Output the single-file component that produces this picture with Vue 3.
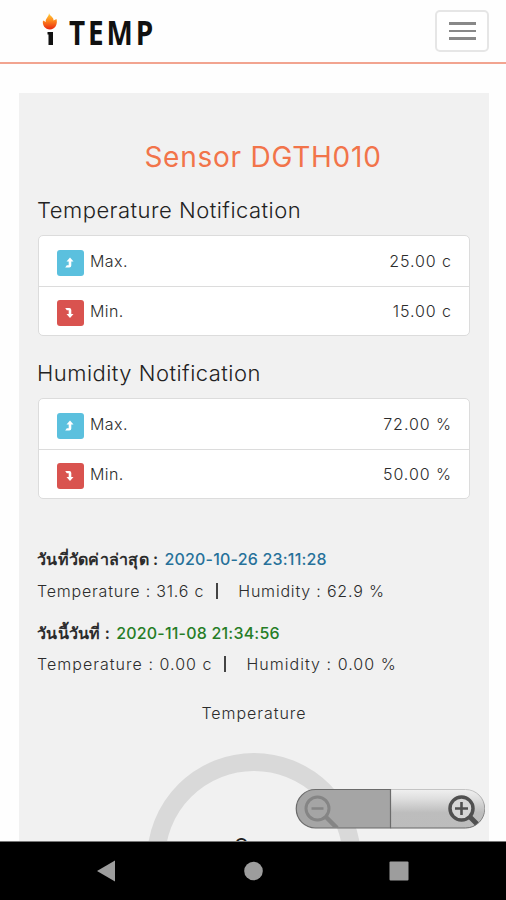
<!-- App.vue -->
<!-- Sensor detail page -->
<template>
  <div class="screen">
    <header class="navbar">
      <div class="logo">
        <svg class="flame" width="16" height="34" viewBox="0 0 16 34">
          <defs>
            <linearGradient id="fire" x1="0" y1="0" x2="0" y2="1">
              <stop offset="0" stop-color="#ffd23c" />
              <stop offset="0.45" stop-color="#ff8a1e" />
              <stop offset="1" stop-color="#e8260f" />
            </linearGradient>
          </defs>
          <path d="M7 0C7.5 3 12 4 11.5 7.500L14.500 6C16 11 13 16.500 8 16.500C3 16.500 0 12 1 7.500L4 9C2.500 6 7 4 7 0Z" fill="url(#fire)" />
          <path d="M5.500 19H11V32H6.500V21.500H5.500Z" fill="#111" />
        </svg>
        <span class="brand">TEMP</span>
      </div>
      <button class="toggle" aria-label="menu">
        <span></span>
        <span></span>
        <span></span>
      </button>
    </header>

    <main class="card">
      <h1>Sensor DGTH010</h1>

      <section v-for="group in groups" :key="group.title" class="group">
        <h2>{{ group.title }}</h2>
        <ul>
          <li v-for="row in group.rows" :key="row.label">
            <span class="badge" :class="row.type">
              <svg width="10" height="12" viewBox="0 0 10 12">
                <path v-if="row.type === 'up'" d="M6 0.500L9.500 4.500H7.300V8.500Q7.300 10.500 5.300 10.500H1.200L2.800 8.200H4.700V4.500H2.500Z" />
                <path v-else d="M6 11L9.500 7H7.300V3Q7.300 1 5.300 1H1.200L2.800 3.300H4.700V7H2.500Z" />
              </svg>
            </span>
            <span class="label">{{ row.label }}</span>
            <span class="value">{{ row.value }}</span>
          </li>
        </ul>
      </section>

      <section class="readings">
        <div v-for="item in readings" :key="item.date" class="reading">
          <p class="stamp">
            <span class="thai">{{ item.title }}</span>
            <b :class="item.color">{{ item.date }}</b>
          </p>
          <p class="data">
            <span>Temperature : {{ item.temp }} c</span>
            <i></i>
            <span>Humidity : {{ item.hum }} %</span>
          </p>
        </div>
      </section>

      <p class="gauge-title">Temperature</p>
      <svg class="gauge" width="216" height="216" viewBox="0 0 216 216">
        <circle cx="108" cy="108" r="98" fill="none" stroke="#d9d9d9" stroke-width="18" />
        <text x="95.500" y="107" text-anchor="middle">0</text>
        <text x="122" y="107" text-anchor="middle">c</text>
      </svg>
    </main>

    <div class="zoom">
      <svg width="190" height="42" viewBox="0 0 190 42">
        <defs>
          <linearGradient id="plus" x1="0" y1="0" x2="0" y2="1">
            <stop offset="0" stop-color="#f0f0f0" />
            <stop offset="0.25" stop-color="#dedede" />
            <stop offset="0.6" stop-color="#bdbdbd" />
            <stop offset="1" stop-color="#bcbcbc" />
          </linearGradient>
          <linearGradient id="rim" x1="0" y1="0" x2="0" y2="1">
            <stop offset="0" stop-color="#c4c4c4" />
            <stop offset="1" stop-color="#666" />
          </linearGradient>
          <clipPath id="pill">
            <rect x="1" y="1" width="188.500" height="39" rx="19.500" />
          </clipPath>
        </defs>
        <path d="M95.500 1.500H170.500A19 19 0 0 1 170.500 40H95.500Z" fill="url(#plus)" stroke="url(#rim)" />
        <path d="M95.500 1.500H20.500A19 19 0 0 0 20.500 40H95.500Z" fill="#a5a5a5" stroke="#6b6b6b" stroke-width="1.200" />
        <g fill="none" stroke="#858585" clip-path="url(#pill)">
          <circle cx="22.500" cy="20.500" r="11.500" stroke-width="3" />
          <path d="M16.500 20.500H28.500" stroke-width="2.500" />
          <path d="M31 29L42 40" stroke-width="4.500" />
        </g>
        <g fill="none" stroke="#505050" clip-path="url(#pill)">
          <circle cx="166.500" cy="20.500" r="11.500" fill="#d6d6d6" stroke-width="3.500" />
          <path d="M160 20.500H173M166.500 14V27" stroke-width="2.600" />
          <path d="M174.500 28.500L182 36" stroke-width="5" />
        </g>
      </svg>
    </div>

    <footer class="android">
      <svg width="506" height="58" viewBox="0 0 506 58">
        <g fill="#9d9d9d">
          <path d="M97 29L115 18.500V39.500Z" />
          <circle cx="253.500" cy="29" r="9.300" />
          <rect x="389.500" y="19.500" width="19" height="19" rx="1" />
        </g>
      </svg>
    </footer>
  </div>
</template>

<script setup>
const groups = [
  {
    title: 'Temperature Notification',
    rows: [
      { type: 'up', label: 'Max.', value: '25.00 c' },
      { type: 'down', label: 'Min.', value: '15.00 c' }
    ]
  },
  {
    title: 'Humidity Notification',
    rows: [
      { type: 'up', label: 'Max.', value: '72.00 %' },
      { type: 'down', label: 'Min.', value: '50.00 %' }
    ]
  }
]

const readings = [
  { title: 'วันที่วัดค่าล่าสุด :', date: '2020-10-26 23:11:28', color: 'blue', temp: '31.6', hum: '62.9' },
  { title: 'วันนี้วันที่ :', date: '2020-11-08 21:34:56', color: 'green', temp: '0.00', hum: '0.00' }
]
</script>

<style>
body {
  margin: 0;
  background: #fff;
}
</style>

<style scoped>
.screen {
  position: relative;
  width: 506px;
  height: 900px;
  overflow: hidden;
  background: #fefefe;
  color: #2c2c2c;
  font-family: Inter, "Liberation Sans", sans-serif;
  font-weight: 300;
  font-size: 16px;
  white-space: nowrap;
}

h1, h2, p, ul {
  margin: 0;
  padding: 0;
  font-weight: 300;
}

.navbar {
  display: flex;
  justify-content: space-between;
  box-sizing: border-box;
  height: 64px;
  padding: 10px 17px 0 42px;
  border-bottom: 2px solid #f2a490;
}

.logo {
  display: flex;
  align-items: flex-start;
  padding-top: 3px;
}

.brand {
  margin-left: 11px;
  font-family: "Open Sans", sans-serif;
  font-size: 34px;
  line-height: 38px;
  font-weight: 700;
  color: #111;
  letter-spacing: 3.5px;
  transform: scaleX(0.82);
  transform-origin: left;
}

.toggle {
  display: flex;
  flex-direction: column;
  align-items: center;
  justify-content: center;
  gap: 5px;
  box-sizing: border-box;
  width: 54px;
  height: 42px;
  padding: 0;
  background: #fff;
  border: 2px solid #e6e6e6;
  border-radius: 5px;
}

.toggle span {
  width: 27px;
  height: 2.5px;
  background: #888;
}

.card {
  box-sizing: border-box;
  width: 470px;
  height: 820px;
  margin: 29px 0 0 19px;
  padding: 44px 19px 0;
  background: #f1f1f1;
}

h1 {
  height: 40px;
  padding-left: 18px;
  text-align: center;
  font-size: 28px;
  line-height: 40px;
  font-weight: 400;
  letter-spacing: 0.75px;
  color: #f2744a;
}

.group {
  height: 163px;
}

h2 {
  height: 58px;
  margin-left: -1px;
  font-size: 22px;
  line-height: 67px;
  letter-spacing: 0.48px;
  color: #222;
}

ul {
  box-sizing: border-box;
  height: 101px;
  list-style: none;
  background: #fff;
  border: 1px solid #dcdcdc;
  border-radius: 5px;
}

li {
  display: flex;
  align-items: center;
  box-sizing: border-box;
  height: 50px;
  padding: 0 18px;
}

li + li {
  border-top: 1px solid #dcdcdc;
}

.badge {
  display: flex;
  align-items: center;
  justify-content: center;
  width: 27px;
  height: 26px;
  margin-top: 3px;
  border-radius: 3px;
  fill: #fff;
}

.badge svg {
  margin-right: 4px;
}

.up {
  background: #5bc0de;
}

.down {
  background: #d9534f;
}

.label {
  margin: -1px 0 0 6px;
  letter-spacing: 0.4px;
}

.value {
  margin: -1px -1px 0 auto;
  letter-spacing: 0.95px;
}

.readings {
  padding-top: 41px;
  margin-left: -1px;
}

.reading {
  height: 73.500px;
}

.stamp {
  display: flex;
  height: 31px;
  font-weight: 500;
  line-height: 31px;
}

.thai {
  margin-right: 6px;
  font-weight: 600;
  letter-spacing: 0.25px;
}

b {
  font-weight: 500;
  letter-spacing: 0.2px;
}

b.blue {
  color: #27719a;
}

b.green {
  color: #267d26;
}

.data {
  display: flex;
  align-items: center;
  height: 31px;
  letter-spacing: 0.8px;
}

.reading:nth-child(2) .data {
  letter-spacing: 1.03px;
}

.data i {
  width: 2px;
  height: 16px;
  margin: 0 20px 0 12px;
  background: #444;
}

.gauge-title {
  height: 24px;
  margin-top: 10px;
  line-height: 24px;
  text-align: center;
  letter-spacing: 0.95px;
}

.gauge {
  display: block;
  margin: 27px auto 0;
}

.gauge text {
  font-size: 28px;
  fill: #222;
}

.zoom {
  position: absolute;
  left: 295px;
  top: 788px;
}

.android {
  position: absolute;
  left: 0;
  bottom: 0;
  height: 58px;
  background: #000;
  border-top: 1px solid #777;
}
</style>
